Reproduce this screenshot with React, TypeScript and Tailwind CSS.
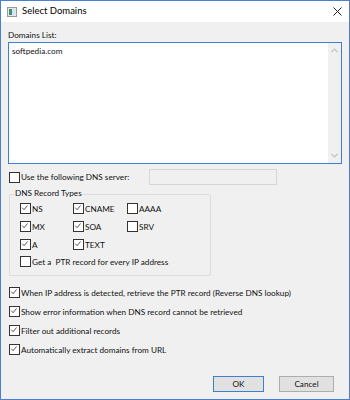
import React from 'react';

const font = { fontFamily: 'Lato, "Noto Sans", sans-serif' };

function Check({ checked, className = '' }: { checked?: boolean; className?: string }) {
  return (
    <span className={`relative inline-block h-[11px] w-[11px] shrink-0 border border-[#333] bg-white ${className}`}>
      {checked && (
        <svg viewBox="0 0 11 11" className="absolute left-0 top-0 h-[9px] w-[9px]">
          <path d="M1.5 4.5 L3.8 7 L8 1.8" fill="none" stroke="#333" strokeWidth="1" />
        </svg>
      )}
    </span>
  );
}

function Opt({ label, checked }: { label: string; checked?: boolean }) {
  return (
    <div className="flex items-center">
      <Check checked={checked} />
      <span className="ml-[1px] whitespace-pre leading-none">{label}</span>
    </div>
  );
}

export default function App() {
  return (
    <div className="flex h-[400px] w-[350px] flex-col border border-[#4c7fd0] bg-[#f0f0f0] text-[8.2px] text-[#111]" style={font}>
      {/* title bar */}
      <div className="flex h-[21px] shrink-0 items-center bg-white pl-[6px] pr-[7px]">
        <svg width="10" height="10" viewBox="0 0 10 10" className="shrink-0">
          <rect x="0.5" y="0.5" width="9" height="9" fill="#e8e8e8" stroke="#9a9a9a" />
          <rect x="2" y="2" width="3" height="6" fill="#3f8f7a" />
          <rect x="5" y="2" width="3" height="6" fill="#cfe3f4" />
        </svg>
        <span className="ml-[5px] text-[9.5px] text-black">Select Domains</span>
        <svg width="9" height="9" viewBox="0 0 9 9" className="ml-auto">
          <path d="M0.5 0.5 L8.5 8.5 M8.5 0.5 L0.5 8.5" stroke="#222" strokeWidth="1" />
        </svg>
      </div>

      <div className="flex flex-1 flex-col px-[7px]">
        <div className="mt-[9px] leading-none">Domains List:</div>
        {/* textarea */}
        <div className="mt-[3px] flex h-[122px] border border-[#3d7fd3] bg-white">
          <div className="flex-1 pl-[3px] pt-[4px] leading-none">softpedia.com</div>
          <div className="flex w-[13px] flex-col items-center justify-between bg-[#f0f0f0] py-[5px]">
            <svg width="7" height="5" viewBox="0 0 7 5"><path d="M0.5 4 L3.5 1 L6.5 4" fill="none" stroke="#c2c2c2" strokeWidth="1.2" /></svg>
            <svg width="7" height="5" viewBox="0 0 7 5"><path d="M0.5 1 L3.5 4 L6.5 1" fill="none" stroke="#c2c2c2" strokeWidth="1.2" /></svg>
          </div>
        </div>

        {/* dns server */}
        <div className="mt-[5px] flex items-center pl-[1px]">
          <Opt label="Use the following DNS server:" />
          <div className="ml-auto mr-[65px] h-[16px] w-[128px] border border-[#d6d6d6] bg-[#f0f0f0]" />
        </div>

        {/* group */}
        <div className="relative ml-[1px] mt-[9px] h-[82px] w-[202px] rounded-[2px] border border-[#dcdcdc]">
          <span className="absolute left-[4px] top-[-6px] bg-[#f0f0f0] px-[1px] leading-none">DNS Record Types</span>
          <div className="ml-[10px] mt-[8px] grid grid-cols-[53px_54px_40px] gap-y-[7px]">
            <Opt label="NS" checked />
            <Opt label="CNAME" checked />
            <Opt label="AAAA" />
            <Opt label="MX" checked />
            <Opt label="SOA" checked />
            <Opt label="SRV" />
            <Opt label="A" checked />
            <Opt label="TEXT" checked />
          </div>
          <div className="ml-[10px] mt-[6px]">
            <Opt label="Get a  PTR record for every IP address" />
          </div>
        </div>

        {/* options */}
        <div className="ml-[1px] mt-[11px] flex flex-col gap-[8px]">
          <Opt label="When IP address is detected, retrieve the PTR record (Reverse DNS lookup)" checked />
          <Opt label="Show error information when DNS record cannot be retrieved" checked />
          <Opt label="Filter out additional records" checked />
          <Opt label="Automatically extract domains from URL" checked />
        </div>

        {/* buttons */}
        <div className="mt-auto mb-[7px] flex justify-end gap-[15px] pr-[8px]">
          <button className="h-[16px] w-[51px] border border-[#3d7fd3] bg-[#e1e1e1] text-[8.2px] leading-none">OK</button>
          <button className="h-[16px] w-[55px] border border-[#adadad] bg-[#e1e1e1] text-[8.2px] leading-none">Cancel</button>
        </div>
      </div>
    </div>
  );
}
